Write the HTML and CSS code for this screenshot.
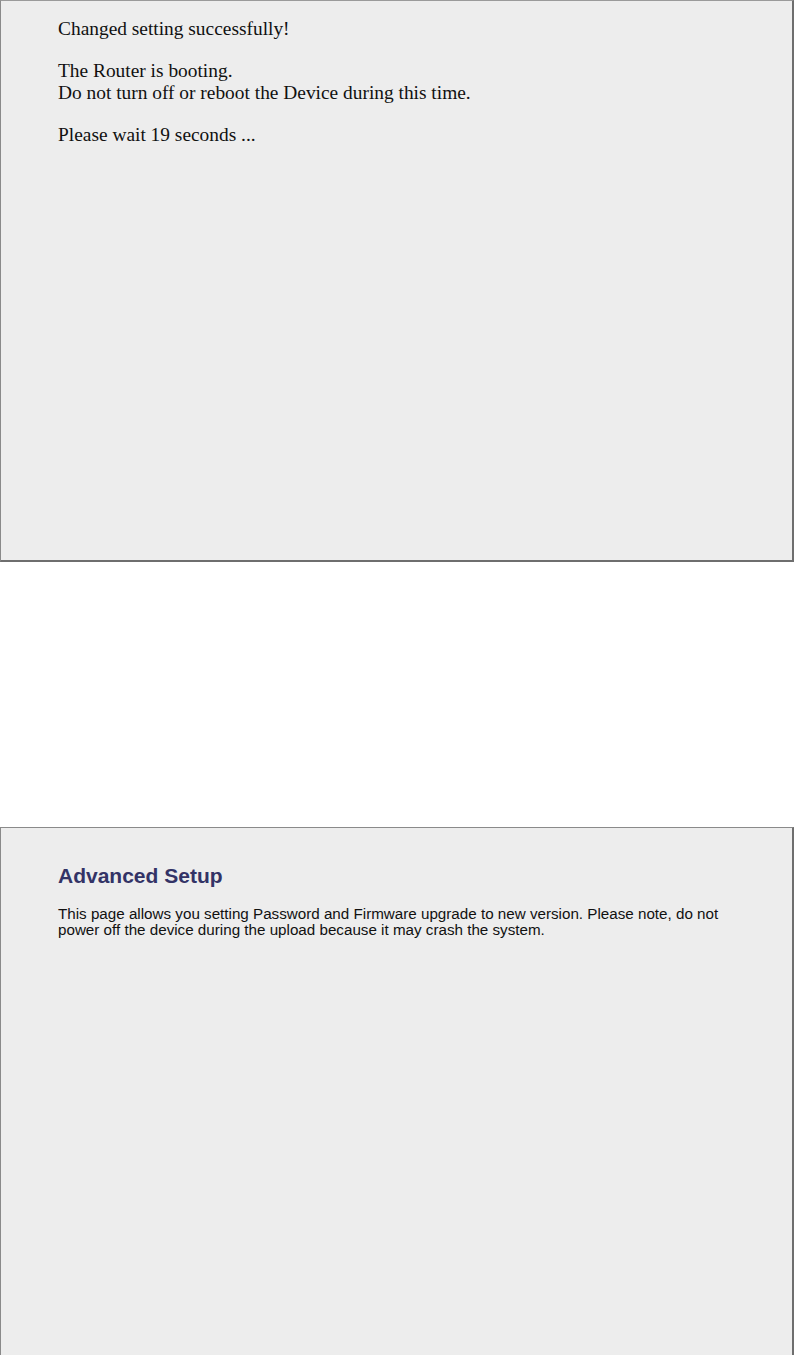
FILE: index.html
```html
<!DOCTYPE html>
<html lang="en">

<head>
    <meta charset="UTF-8" />
    <title>Router</title>
    <link rel="stylesheet" href="styles.css">
</head>

<body>
    <div class="panel" id="reboot-panel">
        <p class="notice">
            Changed setting successfully!<br><br>
            The Router is booting.<br>
            Do not turn off or reboot the Device during this time.<br><br>
            Please wait 19 seconds ...
        </p>
    </div>

    <div class="panel" id="setup-panel">
        <h1>Advanced Setup</h1>
        <p class="intro">This page allows you setting Password and Firmware upgrade to new version. Please note, do not
            power off the device during the upload because it may crash the system.</p>
    </div>
</body>

</html>
```

FILE: styles.css
```css
html, body {
    margin: 0;
    padding: 0;
    background: #fff;
}

.panel {
    box-sizing: border-box;
    width: 794px;
    background: #ededed;
    border: 1px solid #8a8a8a;
    border-right: 2px solid #6e6e6e;
    border-bottom: 2px solid #6e6e6e;
    padding-left: 57px;
}

#reboot-panel {
    height: 562px;
    border-top-color: #9a9a9a;
}

#setup-panel {
    margin-top: 265px;
    height: 528px;
    border-bottom: none;
}

.notice {
    margin: 0;
    padding-top: 17px;
    font-family: "Liberation Serif", "Times New Roman", serif;
    font-size: 19.4px;
    line-height: 21.2px;
    color: #111;
}

#setup-panel h1 {
    margin: 0;
    padding-top: 36px;
    font-family: "Liberation Sans", Arial, sans-serif;
    font-size: 21px;
    font-weight: bold;
    color: #333366;
}

.intro {
    margin: 18px 0 0;
    width: 690px;
    font-family: "Liberation Sans", Arial, sans-serif;
    font-size: 15.2px;
    line-height: 16px;
    color: #111;
}
```
